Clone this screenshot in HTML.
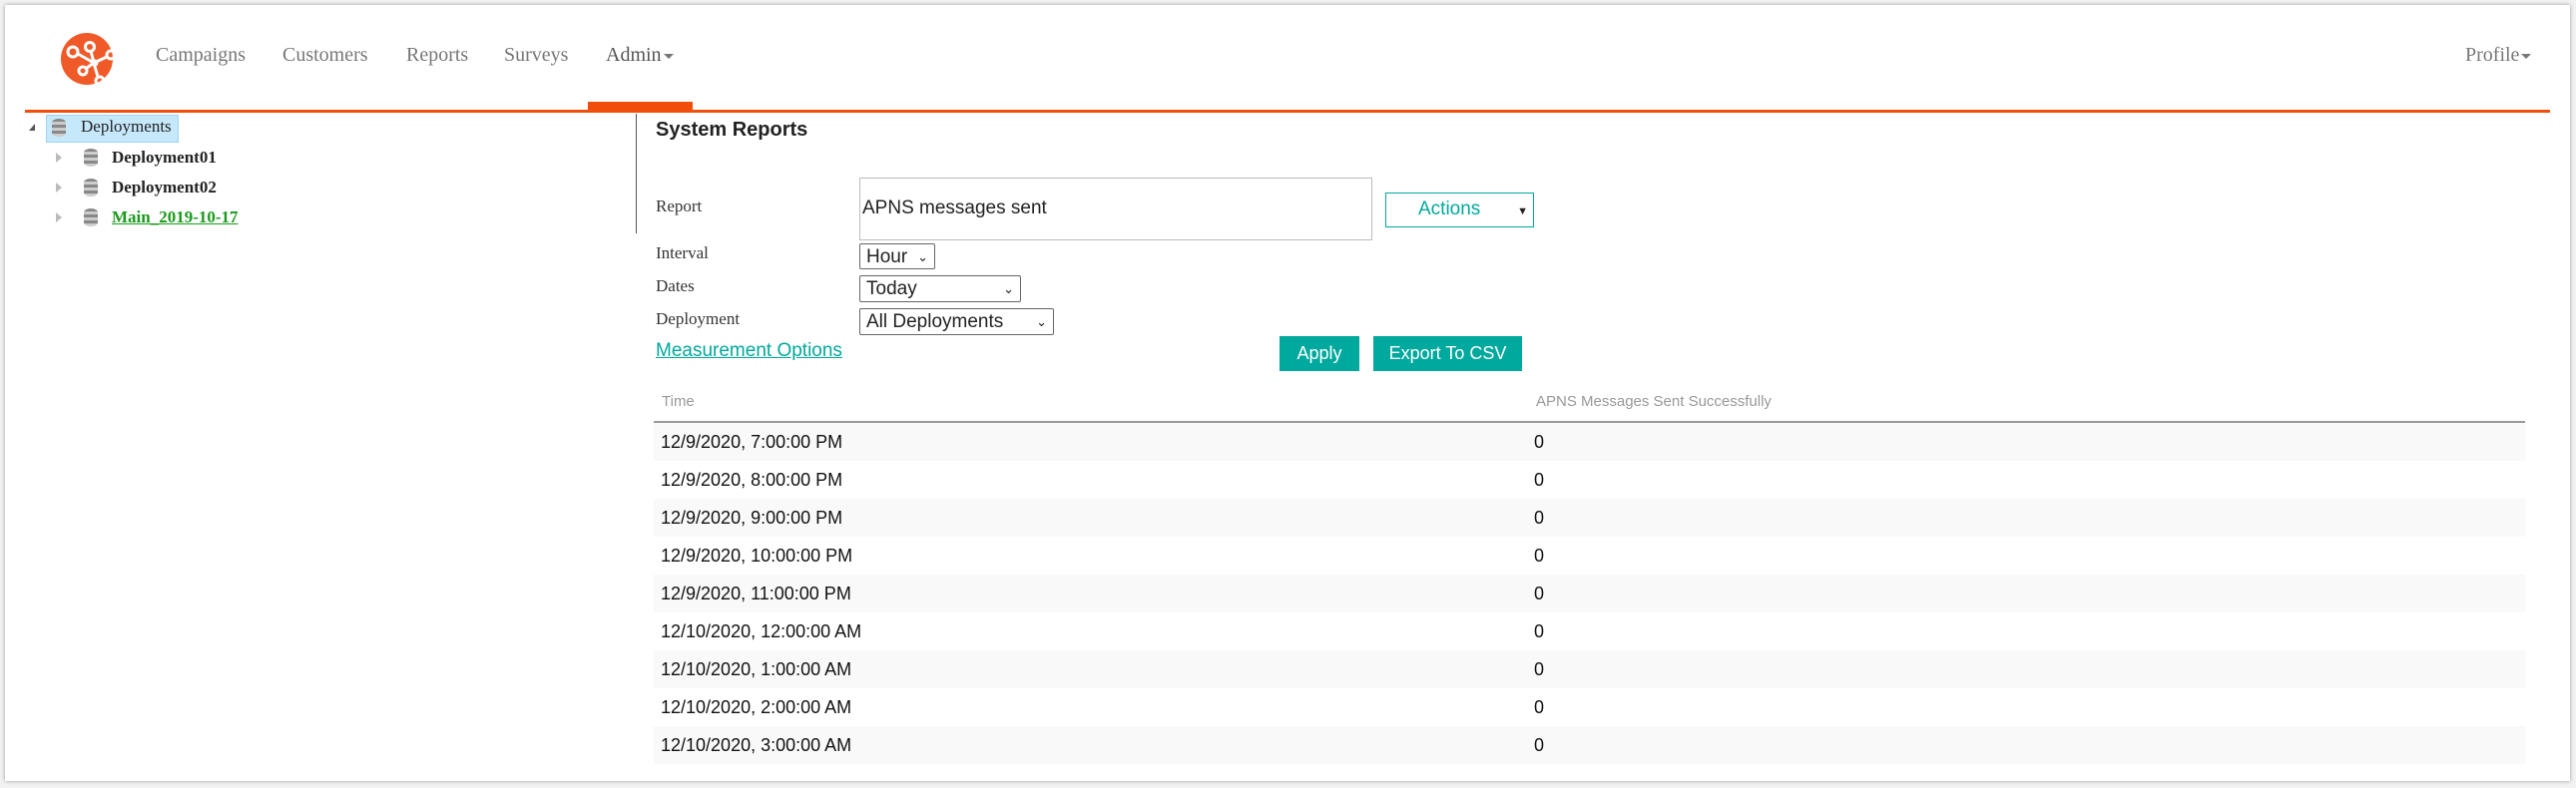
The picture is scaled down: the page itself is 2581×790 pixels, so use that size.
<!DOCTYPE html>
<html><head><meta charset="utf-8"><style>
*{margin:0;padding:0;box-sizing:border-box}
body{width:2581px;height:790px;background:#f2f2f2;position:relative;overflow:hidden;font-family:"Liberation Sans",sans-serif}
.page{position:absolute;left:5px;top:5px;width:2570px;height:778px;background:#fff;box-shadow:0 0 4px rgba(0,0,0,.35)}
.a{position:absolute;white-space:nowrap}
.nav{font-family:"Liberation Serif",serif;font-size:20px;color:#777;top:44px}
.caret{display:inline-block;width:0;height:0;border-left:5px solid transparent;border-right:5px solid transparent;border-top:5px solid #777;vertical-align:middle;margin-left:2px}
.lbl{font-family:"Liberation Serif",serif;font-size:17px;color:#333;left:657px}
.sel{position:absolute;border:1px solid #666;border-radius:2px;background:#fff;font-size:19px;color:#222;padding-left:6px;line-height:26px}
.sel span{position:absolute;right:6px;top:0;font-size:13px}
.btn{position:absolute;background:#00a99d;color:#fff;font-size:18px;text-align:center;line-height:34px}
.row{position:absolute;left:655px;width:1875px;height:38px;font-size:18px;color:#111;line-height:38px}
.row .t{position:absolute;left:7px}.row .v{position:absolute;left:882px}
.odd{background:#f9f9f9}
.tree{font-family:"Liberation Serif",serif;font-weight:bold;font-size:17px;color:#222}
.db{position:absolute;width:14px;height:18px;border-radius:7px/4px;background:repeating-linear-gradient(#888 0 3px,#ccc 3px 6px)}
.tri{position:absolute;width:0;height:0;border-top:5px solid transparent;border-bottom:5px solid transparent;border-left:6px solid #bbb}
</style></head><body><div class="page"></div>
<svg class="a" style="left:61px;top:33px" width="52" height="52" viewBox="0 0 52 52"><circle cx="26" cy="26" r="26" fill="#f05a28"/><g stroke="#fff" stroke-width="3" fill="none"><circle cx="12" cy="19" r="5"/><circle cx="29" cy="14" r="4.5"/><circle cx="22" cy="38" r="4"/><circle cx="50" cy="22" r="4"/><circle cx="39" cy="48" r="4"/><path d="M17 21L33 30M30 18L33 30M33 30L26 35M33 30L46 24M33 30L37 44"/></g><circle cx="34" cy="30" r="3.5" fill="#fff"/></svg>
<div class="a nav" style="left:156px">Campaigns</div>
<div class="a nav" style="left:283px">Customers</div>
<div class="a nav" style="left:407px">Reports</div>
<div class="a nav" style="left:505px">Surveys</div>
<div class="a nav" style="left:607px;color:#555">Admin<span class="caret"></span></div>
<div class="a nav" style="left:2470px">Profile<span class="caret"></span></div>
<div class="a" style="left:589px;top:102px;width:105px;height:8px;background:#f04e0a"></div>
<div class="a" style="left:25px;top:110px;width:2530px;height:3px;background:#f04e0a"></div>
<div class="a" style="left:637px;top:114px;width:1px;height:120px;background:#555"></div>
<div class="a" style="left:29px;top:124px;width:0;height:0;border-left:6px solid transparent;border-bottom:7px solid #555"></div>
<div class="a" style="left:46px;top:115px;width:133px;height:28px;background:#c6e8fb;border:1px solid #9cd4f3"></div>
<div class="db" style="left:52px;top:119px"></div>
<div class="a tree" style="left:81px;top:117px;font-weight:normal">Deployments</div>
<div class="tri" style="left:56px;top:153px"></div><div class="db" style="left:84px;top:149px"></div><div class="a tree" style="left:112px;top:148px">Deployment01</div>
<div class="tri" style="left:56px;top:183px"></div><div class="db" style="left:84px;top:179px"></div><div class="a tree" style="left:112px;top:178px">Deployment02</div>
<div class="tri" style="left:56px;top:213px"></div><div class="db" style="left:84px;top:209px"></div><div class="a tree" style="left:112px;top:208px;color:#1a9a1a;text-decoration:underline">Main_2019-10-17</div>
<div class="a" style="left:657px;top:119px;font-size:20px;font-weight:bold;color:#222">System Reports</div>
<div class="a lbl" style="top:197px">Report</div>
<div class="a" style="left:861px;top:178px;width:514px;height:63px;border:1px solid #bbb;font-size:19px;color:#222;padding:19px 0 0 2px">APNS messages sent</div>
<div class="a" style="left:1388px;top:193px;width:149px;height:35px;border:1px solid #00a99d;color:#00a99d;font-size:19px;line-height:32px;padding-left:32px">Actions<span style="position:absolute;right:5px;top:2px;color:#222;font-size:11px">▼</span></div>
<div class="a lbl" style="top:244px">Interval</div>
<div class="sel" style="left:861px;top:244px;width:76px;height:26px">Hour<span>⌄</span></div>
<div class="a lbl" style="top:277px">Dates</div>
<div class="sel" style="left:861px;top:276px;width:162px;height:27px">Today<span>⌄</span></div>
<div class="a lbl" style="top:310px">Deployment</div>
<div class="sel" style="left:861px;top:309px;width:195px;height:27px">All Deployments<span>⌄</span></div>
<div class="a" style="left:657px;top:341px;font-size:19px;color:#00a99d;text-decoration:underline">Measurement Options</div>
<div class="btn" style="left:1282px;top:337px;width:80px;height:35px">Apply</div>
<div class="btn" style="left:1376px;top:337px;width:149px;height:35px">Export To CSV</div>
<div class="a" style="left:663px;top:394px;font-size:15px;color:#999">Time</div>
<div class="a" style="left:1539px;top:394px;font-size:15px;color:#999">APNS Messages Sent Successfully</div>
<div class="a" style="left:655px;top:422px;width:1875px;height:2px;background:#999"></div>
<div class="row odd" style="top:424px"><span class="t">12/9/2020, 7:00:00 PM</span><span class="v">0</span></div>
<div class="row" style="top:462px"><span class="t">12/9/2020, 8:00:00 PM</span><span class="v">0</span></div>
<div class="row odd" style="top:500px"><span class="t">12/9/2020, 9:00:00 PM</span><span class="v">0</span></div>
<div class="row" style="top:538px"><span class="t">12/9/2020, 10:00:00 PM</span><span class="v">0</span></div>
<div class="row odd" style="top:576px"><span class="t">12/9/2020, 11:00:00 PM</span><span class="v">0</span></div>
<div class="row" style="top:614px"><span class="t">12/10/2020, 12:00:00 AM</span><span class="v">0</span></div>
<div class="row odd" style="top:652px"><span class="t">12/10/2020, 1:00:00 AM</span><span class="v">0</span></div>
<div class="row" style="top:690px"><span class="t">12/10/2020, 2:00:00 AM</span><span class="v">0</span></div>
<div class="row odd" style="top:728px"><span class="t">12/10/2020, 3:00:00 AM</span><span class="v">0</span></div>
</body></html>
